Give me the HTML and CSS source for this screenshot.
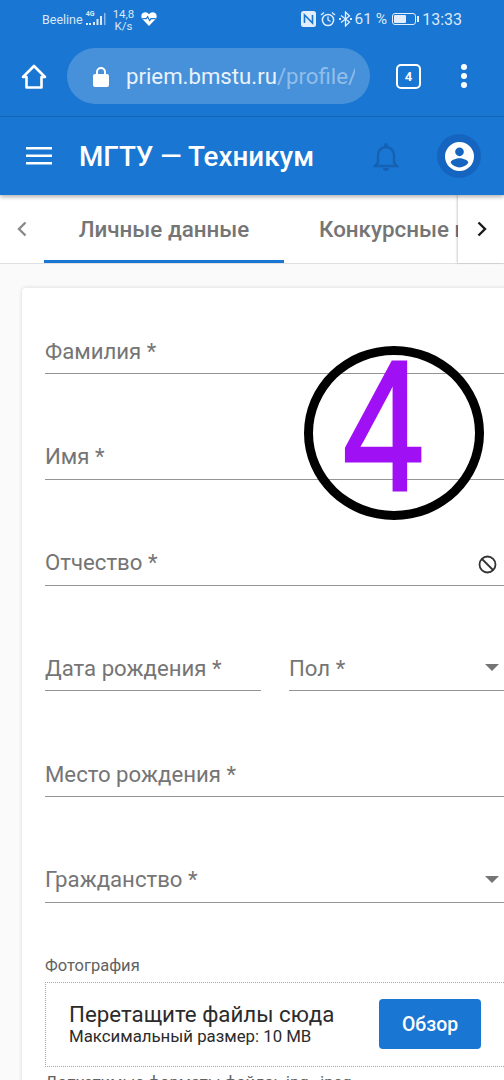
FILE: index.html
```html
<!DOCTYPE html>
<html lang="ru">
<head>
  <meta charset="UTF-8">
  <title>МГТУ — Техникум</title>
  <meta name="viewport" content="width=device-width, initial-scale=1.0">
  <link rel="stylesheet" href="styles.css">
</head>
<body>
  <div class="screen">
    <div class="status-bar">
      <div class="status-left">
        <span class="carrier">Beeline</span>
        <span class="net">
          <span class="net-type">4G</span>
          <svg width="24" height="16" viewBox="0 0 24 16"><path fill="#dbe8f7" d="M0 12h2v2H0zM3 12h2v2H3zM7 11h2v3H7zM10.500 8h2v6h-2zM14 5h2v9h-2z"/><path fill="#8fb8e6" d="M18 2h1.500v12H18z"/></svg>
        </span>
        <span class="speed">14,8<br>K/s</span>
        <svg class="heart" width="16" height="14" viewBox="0 0 24 21"><path fill="#fff" d="M12 21 2 10.500C-1 7 .5 1 6 .5 8.500.3 10.500 1.500 12 3.500 13.500 1.500 15.500.3 18 .5c5.500.5 7 6.500 4 10z"/><path fill="none" stroke="#1976d2" stroke-width="1.800" d="M2 10h6l2-3 3 6 2-3h7"/></svg>
      </div>
      <div class="status-right">
        <svg width="15" height="16" viewBox="0 0 15 16"><rect width="15" height="16" rx="2.500" fill="#e3eefa"/><path fill="none" stroke="#1976d2" stroke-width="1.600" d="M3.500 12V4l8 8V4"/></svg>
        <svg class="alarm" width="16" height="16" viewBox="0 0 16 16"><circle cx="8" cy="9" r="5.600" fill="none" stroke="#e3eefa" stroke-width="1.500"/><path fill="none" stroke="#e3eefa" stroke-width="1.300" d="M8 5.500V9l2.500 1.500M1 4l3-2.500M15 4l-3-2.500"/></svg>
        <svg class="bluetooth" width="13" height="16" viewBox="0 0 13 16"><path fill="none" stroke="#e3eefa" stroke-width="1.300" d="M2 4.500 10.500 11 6.500 15V1l4 4L2 11.500"/><path fill="#e3eefa" d="M0 7h2v2H0zM11 7h2v2h-2z"/></svg>
        <span class="battery-pct">61 %</span>
        <span class="battery"><span class="battery-level"></span></span>
        <span class="clock">13:33</span>
      </div>
    </div>

    <div class="browser-bar">
      <svg class="home" width="26" height="25" viewBox="0 0 26 25"><path fill="none" stroke="#fff" stroke-width="2.600" stroke-linejoin="round" d="M13 2 2 13h3.500v10.500h15V13H24z"/></svg>
      <div class="url-pill">
        <svg width="16" height="21" viewBox="0 0 16 21"><path fill="none" stroke="#fff" stroke-width="2" d="M4 9V6a4 4 0 0 1 8 0v3"/><rect y="8" width="16" height="13" rx="2" fill="#fff"/></svg>
        <span class="url">priem.bmstu.ru<span class="url-path">/profile/</span></span>
      </div>
      <span class="tab-count">4</span>
      <span class="more"><i></i><i></i><i></i></span>
    </div>

    <header class="app-header">
      <svg class="menu" width="26" height="18" viewBox="0 0 26 18"><path fill="#fff" d="M0 0h26v2.400H0zM0 7.500h26v2.400H0zM0 15h26v2.400H0z"/></svg>
      <h1>МГТУ — Техникум</h1>
      <svg class="bell" width="26" height="30" viewBox="0 0 26 30"><path fill="none" stroke="#1561b4" stroke-width="2.400" d="M2 24h22l-3-3.500V13c0-4.500-3.500-8-8-8s-8 3.500-8 8v7.500z"/><path fill="#1561b4" d="M11 3a2 2 0 0 1 4 0v3h-4zM10 26h6a3 3 0 0 1-6 0z"/></svg>
      <span class="avatar">
        <svg width="29" height="29" viewBox="0 0 24 24"><path fill="#fff" d="M12 0a12 12 0 1 0 0 24 12 12 0 0 0 0-24zm0 4.500a3.600 3.600 0 1 1 0 7.200 3.600 3.600 0 0 1 0-7.200zm0 16.500c-3 0-5.700-1.500-7.300-3.800 0-2.400 4.900-3.700 7.300-3.700s7.300 1.300 7.300 3.700C17.700 19.500 15 21 12 21z"/></svg>
      </span>
    </header>

    <nav class="tabs">
      <span class="tab-arrow">
        <svg width="11" height="16" viewBox="0 0 11 16"><path fill="none" stroke="#8a8a8a" stroke-width="2.400" d="M9.500 1.500 3 8l6.500 6.500"/></svg>
      </span>
      <div class="tab-list">
        <span class="tab tab-active">Личные данные</span>
        <span class="tab">Конкурсные группы</span>
      </div>
      <span class="tab-arrow tab-arrow-next">
        <svg width="11" height="16" viewBox="0 0 11 16"><path fill="none" stroke="#1a1a1a" stroke-width="2.400" d="M1.500 1.500 8 8l-6.500 6.500"/></svg>
      </span>
    </nav>

    <main class="content">
      <form class="card">
        <div class="field">Фамилия *</div>
        <div class="field">Имя *</div>
        <div class="field">Отчество *
          <svg class="field-icon" width="19" height="19" viewBox="0 0 19 19"><circle cx="9.500" cy="9.500" r="8" fill="none" stroke="#333" stroke-width="1.800"/><path stroke="#333" stroke-width="1.800" d="M4 4l11 11"/></svg>
        </div>
        <div class="field-row">
          <div class="field field-date">Дата рождения *</div>
          <div class="field field-grow">Пол *<span class="drop-arrow"></span></div>
        </div>
        <div class="field">Место рождения *</div>
        <div class="field">Гражданство *<span class="drop-arrow"></span></div>

        <div class="upload-label">Фотография</div>
        <div class="dropzone">
          <div>
            <div class="drop-title">Перетащите файлы сюда</div>
            <div class="drop-sub">Максимальный размер: 10 MB</div>
          </div>
          <button type="button" class="browse">Обзор</button>
        </div>
        <div class="upload-hint">Допустимые форматы файла: .jpg, .jpeg</div>
      </form>
    </main>

    <div class="mark">
      <span class="mark-digit">4</span>
    </div>
  </div>
</body>
</html>
```

FILE: styles.css
```css
* {
  box-sizing: border-box;
}
html, body {
  margin: 0;
  padding: 0;
}
body {
  font-family: 'Roboto', sans-serif;
  background: #fafafa;
}
.screen {
  position: relative;
  width: 504px;
  height: 1080px;
  overflow: hidden;
  display: flex;
  flex-direction: column;
}

/* status bar */
.status-bar {
  height: 36px;
  flex-shrink: 0;
  background: #1976d2;
  color: #dbe8f7;
  display: flex;
  align-items: center;
  justify-content: space-between;
  padding: 2px 42px 0 42px;
}
.status-left, .status-right {
  display: flex;
  align-items: center;
}
.carrier {
  font-size: 12.500px;
}
.net {
  position: relative;
  width: 24px;
  height: 16px;
  margin-left: 3px;
}
.net-type {
  position: absolute;
  left: 0;
  top: -1px;
  font-size: 7px;
  font-weight: 700;
}
.net svg {
  display: block;
}
.speed {
  font-size: 11.500px;
  line-height: 12px;
  text-align: center;
  margin-left: 3px;
  margin-top: 1px;
}
.heart {
  margin-left: 7px;
}
.alarm {
  margin-left: 4px;
}
.bluetooth {
  margin-left: 3px;
}
.battery-pct {
  font-size: 15.500px;
  margin-left: 3px;
}
.battery {
  position: relative;
  width: 24px;
  height: 12px;
  margin-left: 5px;
  border: 1px solid #e3eefa;
  border-radius: 3px;
  padding: 1px;
}
.battery::after {
  content: "";
  position: absolute;
  right: -4px;
  top: 2px;
  width: 2px;
  height: 6px;
  background: #e3eefa;
}
.battery-level {
  display: block;
  width: 61%;
  height: 100%;
  background: #e3eefa;
  border-radius: 1px;
}
.clock {
  font-size: 16px;
  margin-left: 6px;
}

/* browser bar */
.browser-bar {
  height: 81px;
  flex-shrink: 0;
  background: #1976d2;
  border-bottom: 1px solid #1669bf;
  display: flex;
  align-items: center;
  padding-left: 21px;
}
.url-pill {
  width: 303px;
  height: 56px;
  margin-left: 20px;
  padding-left: 26px;
  border-radius: 28px;
  background: rgba(255, 255, 255, 0.2);
  display: flex;
  align-items: center;
  overflow: hidden;
}
.url {
  font-size: 22.200px;
  color: #eaf2fb;
  margin-left: 17px;
  white-space: nowrap;
  width: 229px;
  overflow: hidden;
}
.url-path {
  color: rgba(255, 255, 255, 0.42);
}
.tab-count {
  width: 25px;
  height: 25px;
  margin-left: 26px;
  border: 2.500px solid #fff;
  border-radius: 5px;
  color: #fff;
  font-size: 13px;
  font-weight: 700;
  display: flex;
  align-items: center;
  justify-content: center;
}
.more {
  margin-left: 40px;
  display: flex;
  flex-direction: column;
  gap: 3px;
}
.more i {
  width: 6px;
  height: 6px;
  border-radius: 50%;
  background: #fff;
}

/* app header */
.app-header {
  position: relative;
  z-index: 2;
  height: 78px;
  flex-shrink: 0;
  background: #1976d2;
  box-shadow: 0 2px 4px rgba(0, 0, 0, 0.3);
  display: flex;
  align-items: center;
  padding-left: 26px;
}
.app-header h1 {
  margin: 0 0 0 27px;
  font-size: 27.800px;
  font-weight: 500;
  color: #fff;
  width: 294px;
  white-space: nowrap;
}
.bell {
  margin-top: 2px;
}
.avatar {
  width: 44px;
  height: 44px;
  margin-left: 38px;
  border-radius: 50%;
  background: #1565c0;
  display: flex;
  align-items: center;
  justify-content: center;
}

/* tabs */
.tabs {
  height: 69px;
  flex-shrink: 0;
  background: #fff;
  border-bottom: 1px solid #e0e0e0;
  display: flex;
}
.tab-arrow {
  width: 44px;
  flex-shrink: 0;
  display: flex;
  align-items: center;
  justify-content: center;
  padding-right: 1px;
}
.tab-arrow-next {
  width: 46px;
  padding-left: 3px;
  padding-right: 0;
  background: #fff;
  box-shadow: -1px 0 2px rgba(0, 0, 0, 0.2);
}
.tab-list {
  flex: 1;
  display: flex;
  overflow: hidden;
}
.tab {
  width: 240px;
  flex-shrink: 0;
  display: flex;
  align-items: center;
  justify-content: center;
  font-size: 22.400px;
  font-weight: 500;
  color: #757575;
  white-space: nowrap;
}
.tab + .tab {
  justify-content: flex-start;
  padding-left: 35px;
}
.tab-active {
  border-bottom: 3px solid #1976d2;
  padding-top: 3px;
}

/* form */
.content {
  flex: 1;
  padding: 24px 0 0 22px;
  overflow: hidden;
}
.card {
  width: 520px;
  height: 900px;
  padding: 42px 0 0 23px;
  background: #fff;
  border-radius: 4px;
  box-shadow: 0 0 4px rgba(0, 0, 0, 0.14);
}
.field {
  width: 461px;
  height: 44px;
  margin-bottom: 61.800px;
  padding-bottom: 2px;
  border-bottom: 1px solid #949494;
  display: flex;
  align-items: center;
  justify-content: space-between;
  font-size: 22.200px;
  color: #757575;
}
.field-row {
  width: 461px;
  display: flex;
  gap: 28px;
}
.field-date {
  width: 216px;
  flex-shrink: 0;
}
.field-grow {
  flex: 1;
  width: auto;
}
.field-icon {
  margin-right: 9px;
  margin-top: 4px;
}
.drop-arrow {
  width: 0;
  height: 0;
  margin-right: 7px;
  border-left: 7.500px solid transparent;
  border-right: 7.500px solid transparent;
  border-top: 7.500px solid #757575;
}

/* upload */
.upload-label {
  margin-top: -8px;
  font-size: 16.500px;
  line-height: 17px;
  color: #616161;
}
.dropzone {
  width: 461px;
  height: 85px;
  margin-top: 8px;
  padding: 0 24px 0 23px;
  border: 1px dotted #a8a8a8;
  display: flex;
  align-items: center;
  justify-content: space-between;
}
.drop-title {
  font-size: 22.300px;
  line-height: 25px;
  color: #2b2b2b;
}
.drop-sub {
  font-size: 16.800px;
  line-height: 19px;
  color: #2b2b2b;
}
.browse {
  width: 102px;
  height: 50px;
  border: none;
  border-radius: 4px;
  background: #1976d2;
  color: #fff;
  font-family: inherit;
  font-size: 19.400px;
  font-weight: 500;
}
.upload-hint {
  margin-top: 7px;
  font-size: 16.500px;
  line-height: 17px;
  color: #616161;
}

/* hand-drawn mark over the form */
.mark {
  position: absolute;
  left: 304px;
  top: 346px;
  width: 180px;
  height: 174px;
  border: 9px solid #000;
  border-radius: 50%;
  display: flex;
  align-items: center;
  justify-content: center;
}
.mark-digit {
  font-family: 'Liberation Sans', sans-serif;
  font-size: 186px;
  line-height: 1;
  color: #a010f5;
  -webkit-text-stroke: 3px #a010f5;
  transform: translate(-10px, -7px) scaleX(0.79);
}
```
